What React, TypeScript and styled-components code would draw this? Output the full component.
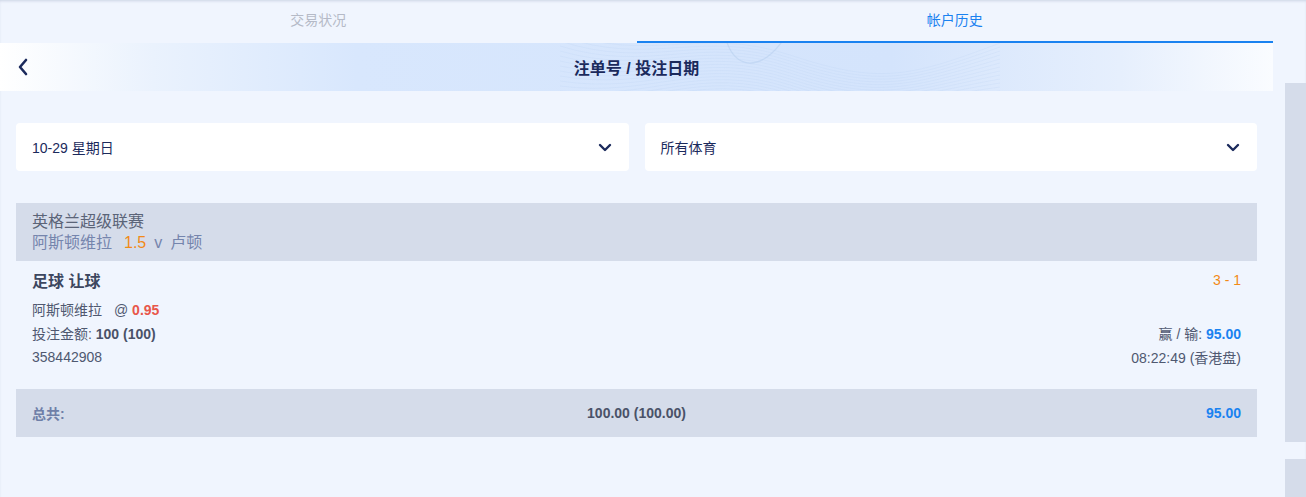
import React, { useState } from "react";
import styled, { createGlobalStyle } from "styled-components";

const GlobalStyle = createGlobalStyle`
  html, body {
    margin: 0;
    padding: 0;
    background: #f0f5fe;
    font-family: "Liberation Sans", "Noto Sans CJK SC", Arial, sans-serif;
    overflow: hidden;
  }
`;

const TABS = ["交易状况", "帐户历史"];

const Page = styled.div`
  display: flex;
  width: 1306px;
  height: 497px;
  background: #f0f5fe;
  box-shadow: inset 0 2px 3px -1px rgba(40, 60, 110, 0.18);
`;

const Main = styled.div`
  width: 1273px;
  flex-shrink: 0;
  display: flex;
  flex-direction: column;
`;

const Side = styled.div`
  display: flex;
  flex-direction: column;
  gap: 17px;
  padding: 83px 0 0 12px;
  flex: 1;
`;

const SidePanel = styled.div<{ tall?: boolean }>`
  flex-shrink: 0;
  height: ${(p) => (p.tall ? "359px" : "60px")};
  background: #d5dcea;
`;

const TabBar = styled.div`
  display: flex;
  height: 43px;
`;

const Tab = styled.button<{ active: boolean }>`
  flex: 1;
  border: none;
  background: transparent;
  font-family: inherit;
  font-size: 14px;
  padding: 0 0 4px;
  color: ${(p) => (p.active ? "#1a82f0" : "#b5bac7")};
  border-bottom: 2px solid ${(p) => (p.active ? "#1a82f0" : "transparent")};
  cursor: pointer;
`;

const Header = styled.div`
  position: relative;
  height: 48px;
  display: flex;
  align-items: center;
  justify-content: center;
  overflow: hidden;
  background: linear-gradient(
    90deg,
    #ffffff 0%,
    #eaf2fd 12%,
    #d8e7fd 28%,
    #d4e4fc 70%,
    #e6effd 88%,
    #fafcff 100%
  );
`;

const Waves = styled.svg`
  position: absolute;
  inset: 0;
  width: 100%;
  height: 100%;
  pointer-events: none;
`;

const BackButton = styled.button`
  position: absolute;
  left: 16px;
  top: 50%;
  transform: translateY(-50%);
  border: none;
  background: transparent;
  padding: 0;
  display: flex;
  cursor: pointer;
`;

const Title = styled.h1`
  position: relative;
  margin: 0;
  font-size: 16px;
  font-weight: 700;
  color: #1b2a5c;
`;

const Content = styled.div`
  padding: 32px 16px 0;
`;

const Filters = styled.div`
  display: grid;
  grid-template-columns: 1fr 1fr;
  gap: 16px;
  margin-bottom: 32px;
`;

const Select = styled.div`
  height: 48px;
  background: #ffffff;
  border-radius: 4px;
  display: flex;
  align-items: center;
  justify-content: space-between;
  padding: 0 17px 0 16px;
  font-size: 14px;
  color: #1b2a5c;
  cursor: pointer;
`;

const MatchHead = styled.div`
  background: #d5dcea;
  padding: 8px 16px;
  font-size: 16px;
  line-height: 21px;
`;

const League = styled.div`
  color: #5b6478;
`;

const Teams = styled.div`
  color: #7585ad;
`;

const Handicap = styled.span`
  color: #f28a16;
  margin: 0 8px 0 12px;
`;

const Versus = styled.span`
  margin-right: 8px;
`;

const Detail = styled.div`
  padding: 9px 16px 20px;
  font-size: 14px;
  color: #4f5870;
`;

const Row = styled.div<{ title?: boolean }>`
  display: flex;
  justify-content: space-between;
  align-items: center;
  height: ${(p) => (p.title ? "20px" : "24px")};
  margin-bottom: ${(p) => (p.title ? "7px" : "0")};
`;

const BetType = styled.span`
  font-size: 16px;
  font-weight: 700;
  color: #3d4760;
`;

const Score = styled.span`
  color: #f28a16;
`;

const At = styled.span`
  margin-left: 12px;
`;

const Odds = styled.b`
  color: #e8574a;
`;

const Strong = styled.b`
  color: #4a5268;
`;

const Win = styled.b`
  color: #1a82f0;
`;

const Total = styled.div`
  height: 48px;
  background: #d5dcea;
  display: grid;
  grid-template-columns: 1fr auto 1fr;
  align-items: center;
  padding: 0 16px;
  font-size: 14px;
  font-weight: 700;
`;

const TotalLabel = styled.span`
  color: #6f7fa8;
`;

const TotalStake = styled.span`
  color: #4a5268;
`;

const TotalWin = styled.span`
  color: #1a82f0;
  text-align: right;
`;

const Chevron = () => (
  <svg width="14" height="9" viewBox="0 0 14 9" fill="none" stroke="#1b2a5c" strokeWidth="2.4" strokeLinecap="round" strokeLinejoin="round">
    <path d="M2 2 L7 7 L12 2" />
  </svg>
);

const App = () => {
  const [tab, setTab] = useState(1);

  return (
    <Page>
      <GlobalStyle />
      <Main>
        <TabBar>
          {TABS.map((label, i) => (
            <Tab key={label} active={tab === i} onClick={() => setTab(i)}>
              {label}
            </Tab>
          ))}
        </TabBar>

        <Header>
          <Waves viewBox="0 0 1273 48" preserveAspectRatio="none">
            {Array.from({ length: 16 }).map((_, i) => (
              <path
                key={i}
                d={`M560 ${-12 + i * 5} C 650 ${22 + i * 3}, 700 ${-18 + i * 3}, 790 ${12 + i * 3} S 910 ${34 + i * 2}, 1000 ${i * 4}`}
                fill="none"
                stroke="#b9d1f2"
                strokeOpacity="0.35"
                strokeWidth="0.6"
              />
            ))}
            <path d="M726 -4 C 734 26, 760 30, 784 -4" fill="none" stroke="#b3cdee" strokeOpacity="0.5" strokeWidth="1.2" />
          </Waves>
          <BackButton aria-label="back">
            <svg width="13" height="18" viewBox="0 0 13 18" fill="none" stroke="#1b2a5c" strokeWidth="2.6" strokeLinecap="round" strokeLinejoin="round">
              <path d="M10 2 L4 9 L10 16" />
            </svg>
          </BackButton>
          <Title>注单号 / 投注日期</Title>
        </Header>

        <Content>
          <Filters>
            <Select>
              <span>10-29 星期日</span>
              <Chevron />
            </Select>
            <Select>
              <span>所有体育</span>
              <Chevron />
            </Select>
          </Filters>

          <MatchHead>
            <League>英格兰超级联赛</League>
            <Teams>
              阿斯顿维拉<Handicap>1.5</Handicap>
              <Versus>v</Versus>卢顿
            </Teams>
          </MatchHead>

          <Detail>
            <Row title>
              <BetType>足球 让球</BetType>
              <Score>3 - 1</Score>
            </Row>
            <Row>
              <span>
                阿斯顿维拉<At>@</At> <Odds>0.95</Odds>
              </span>
            </Row>
            <Row>
              <span>
                投注金额: <Strong>100 (100)</Strong>
              </span>
              <span>
                赢 / 输: <Win>95.00</Win>
              </span>
            </Row>
            <Row>
              <span>358442908</span>
              <span>08:22:49 (香港盘)</span>
            </Row>
          </Detail>

          <Total>
            <TotalLabel>总共:</TotalLabel>
            <TotalStake>100.00 (100.00)</TotalStake>
            <TotalWin>95.00</TotalWin>
          </Total>
        </Content>
      </Main>

      <Side>
        <SidePanel tall />
        <SidePanel />
      </Side>
    </Page>
  );
};

export default App;
